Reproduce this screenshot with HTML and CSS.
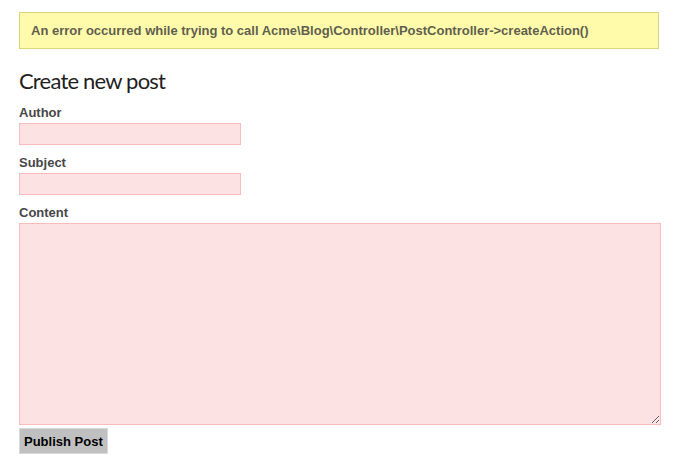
FILE: index.html
```html
<!DOCTYPE html>
<html>
<head>
<meta charset="utf-8">
<link rel="stylesheet" href="styles.css">
</head>
<body>
<div class="page">
  <div class="alert">An error occurred while trying to call Acme\Blog\Controller\PostController-&gt;createAction()</div>
  <h1 class="title">Create new post</h1>
  <form class="form">
    <label class="label" for="author">Author</label>
    <input class="field" id="author" type="text">
    <label class="label" for="subject">Subject</label>
    <input class="field" id="subject" type="text">
    <label class="label" for="content">Content</label>
    <textarea class="area" id="content"></textarea>
    <button class="btn" type="button">Publish Post</button>
  </form>
</div>
</body>
</html>
```
FILE: styles.css
```css
html, body {
  margin: 0;
  padding: 0;
  background: #ffffff;
}
.page {
  padding: 12px 19px 0 19px;
  font-family: "Liberation Sans", Arial, sans-serif;
}
.alert {
  box-sizing: border-box;
  width: 640px;
  height: 37px;
  border: 1px solid #d8d67a;
  background: #fffbab;
  color: #5f5f4f;
  font-size: 13px;
  font-weight: bold;
  line-height: 15px;
  padding: 10px 11px;
}
.title {
  font-family: "Lato", sans-serif;
  font-weight: 400;
  font-size: 22px;
  line-height: 26px;
  letter-spacing: -0.8px;
  color: #1f1f1f;
  margin: 19px 0 0 0;
}
.form {
  display: flex;
  flex-direction: column;
  align-items: flex-start;
  margin-top: 11px;
}
.label {
  font-size: 13px;
  font-weight: bold;
  line-height: 15px;
  color: #474747;
  margin-bottom: 3px;
}
.field {
  box-sizing: border-box;
  width: 222px;
  height: 22px;
  margin: 0 0 10px 0;
  border: 1px solid #f7bcbc;
  background: #fce2e3;
  padding: 2px 4px;
  outline: none;
}
.area {
  box-sizing: border-box;
  width: 642px;
  height: 202px;
  margin: 0;
  border: 1px solid #f7bcbc;
  background: #fce2e3;
  padding: 2px;
  outline: none;
}
.btn {
  box-sizing: border-box;
  margin-top: 3px;
  height: 26px;
  padding: 0 4px;
  border: 1px solid #d9d9d9;
  background: #c0c0c0;
  color: #000000;
  font-family: "Liberation Sans", Arial, sans-serif;
  font-size: 13px;
  font-weight: bold;
}
```
